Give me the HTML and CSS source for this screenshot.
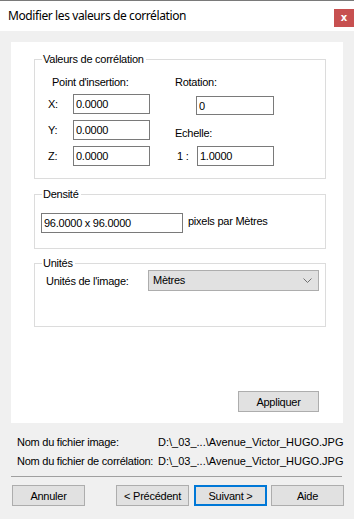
FILE: index.html
```html
<!DOCTYPE html>
<html lang="fr">
<head>
<meta charset="utf-8">
<title>Modifier les valeurs de corrélation</title>
<link rel="stylesheet" href="styles.css">
</head>
<body>
<div class="window">
  <div class="titlebar">
    <span class="title">Modifier les valeurs de corrélation</span>
    <span class="close">x</span>
  </div>
  <div class="main">
    <div class="panel">
      <div class="group g1">
        <span class="group-title">Valeurs de corrélation</span>
        <div class="col-left">
          <div class="head">Point d'insertion:</div>
          <div class="row first"><span class="lbl">X:</span><input class="field w77" value="0.0000"></div>
          <div class="row"><span class="lbl">Y:</span><input class="field w77" value="0.0000"></div>
          <div class="row"><span class="lbl">Z:</span><input class="field w77" value="0.0000"></div>
        </div>
        <div class="col-right">
          <div class="head">Rotation:</div>
          <input class="field rot" value="0">
          <div class="head ech">Echelle:</div>
          <div class="row scale"><span class="lbl one">1 :</span><input class="field w77" value="1.0000"></div>
        </div>
      </div>
      <div class="group g2">
        <span class="group-title">Densité</span>
        <input class="field dens" value="96.0000 x 96.0000">
        <span class="unit">pixels par Mètres</span>
      </div>
      <div class="group g3">
        <span class="group-title">Unités</span>
        <span class="lbl units">Unités de l'image:</span>
        <div class="select">
          <span>Mètres</span>
          <svg class="chev" width="9" height="5" viewBox="0 0 9 5"><path d="M0.5 0.5 L4.5 4.5 L8.5 0.5" fill="none" stroke="#707070" stroke-width="1"/></svg>
        </div>
      </div>
      <div class="apply-row">
        <button class="btn apply">Appliquer</button>
      </div>
    </div>
    <div class="info">
      <div class="info-row"><span class="info-lbl">Nom du fichier image:</span><span class="path">D:\_03_...\Avenue_Victor_HUGO.JPG</span></div>
      <div class="info-row"><span class="info-lbl">Nom du fichier de corrélation:</span><span class="path">D:\_03_...\Avenue_Victor_HUGO.JPG</span></div>
    </div>
    <div class="sep"></div>
    <div class="buttons">
      <button class="btn">Annuler</button>
      <button class="btn prev">&lt; Précédent</button>
      <button class="btn next">Suivant &gt;</button>
      <button class="btn aide">Aide</button>
    </div>
  </div>
</div>
</body>
</html>
```
FILE: styles.css
```css
html, body {
  margin: 0;
  padding: 0;
}
body {
  width: 354px;
  height: 519px;
  overflow: hidden;
  background: #f0f0f0;
  font-family: "Liberation Sans", Arial, sans-serif;
  font-size: 11px;
  letter-spacing: -0.25px;
  color: #000;
  white-space: nowrap;
}
.window {
  display: flex;
  flex-direction: column;
  height: 519px;
}
.titlebar {
  height: 30px;
  border-top: 1px solid #7a7a7a;
  background: #fff;
  display: flex;
  justify-content: space-between;
  align-items: flex-start;
  padding-left: 8px;
}
.title {
  font-family: "Noto Sans", "Liberation Sans", sans-serif;
  font-size: 12px;
  letter-spacing: -0.4px;
  line-height: 16px;
  margin-top: 7px;
  color: #000;
}
.close {
  width: 20px;
  height: 18px;
  margin-top: 8px;
  background: #c75050;
  color: #fff;
  font-family: "DejaVu Sans", sans-serif;
  font-weight: bold;
  font-size: 10px;
  letter-spacing: 0;
  line-height: 17px;
  text-align: center;
}
.main {
  padding: 11px 11px 0 11px;
  display: flex;
  flex-direction: column;
}
.panel {
  background: #fff;
  height: 381px;
  display: flex;
  flex-direction: column;
}
.group {
  position: relative;
  border: 1px solid #dcdcdc;
  box-sizing: border-box;
  margin-left: 23px;
  width: 292px;
}
.group-title {
  position: absolute;
  top: -7px;
  left: 7px;
  padding: 0 2px 0 1px;
  background: #fff;
  line-height: 13px;
}
.g1 {
  margin-top: 17px;
  height: 120px;
  display: flex;
}
.col-left {
  margin-left: 13px;
  width: 102px;
}
.col-right {
  margin-left: 25px;
}
.head {
  margin-top: 16px;
  line-height: 13px;
  padding-left: 4px;
}
.col-right .head {
  padding-left: 0;
}
.row {
  display: flex;
  align-items: center;
  margin-top: 6px;
}
.row.first {
  margin-top: 5px;
}
.lbl {
  line-height: 13px;
}
.col-left .lbl {
  width: 25px;
}
.field {
  box-sizing: border-box;
  height: 20px;
  border: 1px solid #7a7a7a;
  background: #fff;
  font-family: "Liberation Sans", Arial, sans-serif;
  font-size: 11px;
  letter-spacing: -0.25px;
  color: #000;
  padding: 0 0 0 2px;
  margin: 0;
  outline: none;
  border-radius: 0;
}
.w77 {
  width: 77px;
}
.rot {
  display: block;
  margin-top: 7px;
  margin-left: 21px;
  width: 78px;
  height: 19px;
}
.head.ech {
  margin-top: 12px;
}
.row.scale {
  margin-top: 6px;
}
.lbl.one {
  width: 20px;
  padding-left: 2px;
}
.g2 {
  margin-top: 15px;
  height: 55px;
  display: flex;
  align-items: flex-start;
  padding: 18px 0 0 6px;
}
.dens {
  width: 142px;
}
.unit {
  margin-left: 5px;
  line-height: 13px;
  margin-top: 2px;
}
.g3 {
  margin-top: 14px;
  height: 64px;
  display: flex;
  align-items: flex-start;
  padding: 6px 0 0 11px;
}
.lbl.units {
  width: 102px;
  margin-top: 5px;
}
.select {
  box-sizing: border-box;
  width: 171px;
  height: 21px;
  background: #e1e1e1;
  border: 1px solid #adadad;
  display: flex;
  align-items: center;
  justify-content: space-between;
  padding: 0 6px 0 4px;
}
.select span {
  margin-top: -2px;
}
.chev {
  display: block;
}
.apply-row {
  margin-top: auto;
  margin-bottom: 11px;
  display: flex;
  justify-content: flex-end;
  padding-right: 24px;
}
.btn {
  box-sizing: border-box;
  width: 73px;
  height: 21px;
  background: #e1e1e1;
  border: 1px solid #adadad;
  font-family: "Liberation Sans", Arial, sans-serif;
  font-size: 11px;
  letter-spacing: -0.25px;
  color: #000;
  padding: 0;
  margin: 0;
  border-radius: 0;
}
.btn.apply {
  width: 81px;
}
.info {
  padding-left: 6px;
  margin-top: 13px;
  display: flex;
  flex-direction: column;
  gap: 6px;
}
.info-row {
  display: flex;
  line-height: 13px;
}
.info-lbl {
  width: 141px;
  flex: none;
}
.path {
  letter-spacing: 0;
}
.sep {
  margin-top: 8px;
  height: 1px;
  width: 331px;
  background: #a0a0a0;
}
.buttons {
  margin-top: 8px;
  display: flex;
  padding-left: 1px;
}
.btn.prev {
  margin-left: auto;
}
.btn.next {
  margin-left: 5px;
  border: 2px solid #0078d7;
}
.btn.aide {
  margin-left: 4px;
  margin-right: -1px;
}
```
